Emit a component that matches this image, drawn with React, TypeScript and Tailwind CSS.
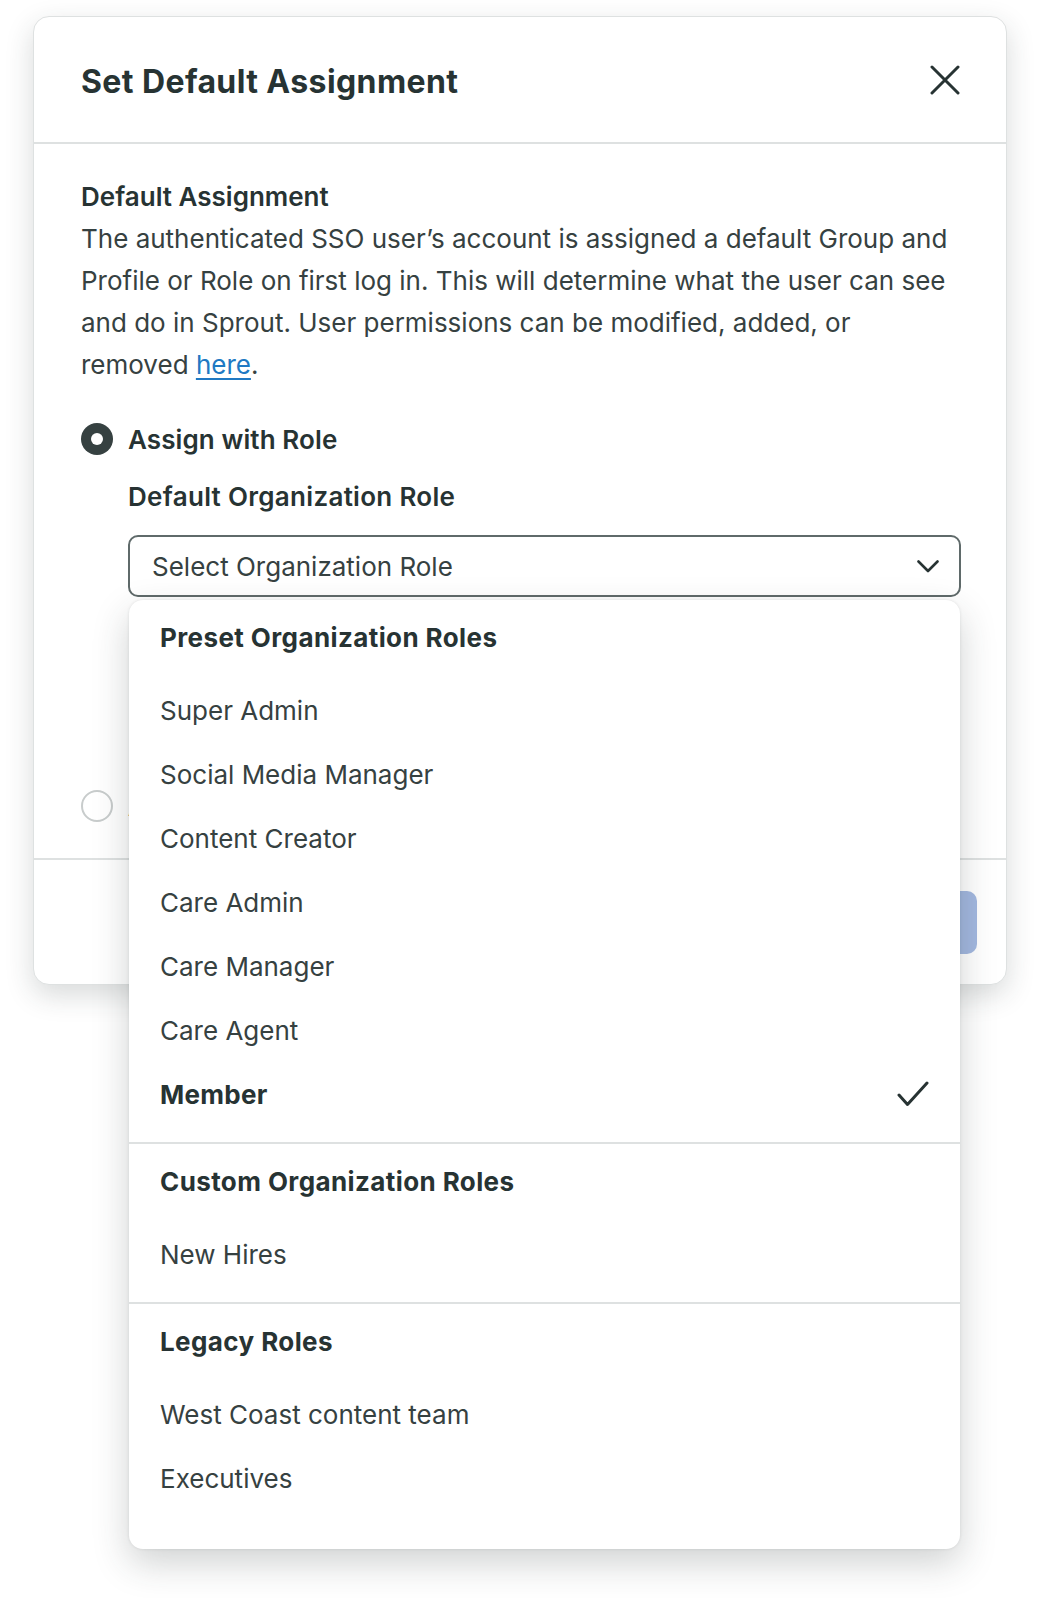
import { useState } from "react";

type Group = { title: string; items: string[] };

const groups: Group[] = [
  {
    title: "Preset Organization Roles",
    items: [
      "Super Admin",
      "Social Media Manager",
      "Content Creator",
      "Care Admin",
      "Care Manager",
      "Care Agent",
      "Member",
    ],
  },
  { title: "Custom Organization Roles", items: ["New Hires"] },
  { title: "Legacy Roles", items: ["West Coast content team", "Executives"] },
];

const CloseIcon = () => (
  <svg width="30" height="30" viewBox="0 0 30 30" fill="none">
    <path d="M2 2L28 28M28 2L2 28" stroke="#273333" strokeWidth="3" strokeLinecap="round" />
  </svg>
);

const Chevron = () => (
  <svg width="22" height="13" viewBox="0 0 22 13" fill="none">
    <path d="M1.5 1.5L11 11L20.5 1.5" stroke="#273333" strokeWidth="2.6" strokeLinecap="round" strokeLinejoin="round" />
  </svg>
);

const Check = () => (
  <svg width="32" height="26" viewBox="0 0 32 26" fill="none">
    <path d="M2 14L10.5 23.5L30 2" stroke="#273333" strokeWidth="3" strokeLinecap="round" strokeLinejoin="round" />
  </svg>
);

const Dropdown = ({ selected }: { selected: string }) => (
  <div className="absolute left-[1px] right-[1px] top-[calc(100%+3px)] z-10 rounded-[14px] bg-white shadow-[0_14px_36px_rgba(39,51,51,0.22),0_0_3px_rgba(39,51,51,0.12)]">
    {groups.map((g, gi) => (
      <div
        key={g.title}
        className={
          gi === groups.length - 1
            ? "pt-[22px] pb-[39px]"
            : "pt-[22px] pb-[16px] border-b-2 border-[#dee1e1]"
        }
      >
        <div className="px-[31px] mb-[24px] text-[26px] leading-[32px] font-bold tracking-[0.4px] text-[#273333]">
          {g.title}
        </div>
        {g.items.map((item) => (
          <div
            key={item}
            className={
              item === selected
                ? "h-16 px-[31px] flex items-center justify-between text-[26px] font-bold tracking-[0.3px] text-[#273333]"
                : "h-16 px-[31px] flex items-center justify-between text-[26px] text-[#364141]"
            }
          >
            <span>{item}</span>
            {item === selected && <Check />}
          </div>
        ))}
      </div>
    ))}
  </div>
);

export default function App() {
  const [role] = useState("Member");

  return (
    <div className="relative w-[1040px] h-[1598px] overflow-hidden bg-white font-['Inter',sans-serif] text-[#364141]">
      <div className="ml-[33px] mt-[16px] w-[974px] h-[969px] flex flex-col rounded-[16px] border border-[#dee1e1] bg-white shadow-[0_10px_28px_rgba(39,51,51,0.18)]">
        <div className="h-[127px] shrink-0 flex items-center justify-between pl-[47px] pr-[45px] border-b-2 border-[#dee1e1]">
          <h1 className="mt-[5px] text-[32px] font-bold tracking-[0.4px] text-[#273333]">Set Default Assignment</h1>
          <button className="w-[32px] h-[32px] flex items-center justify-center">
            <CloseIcon />
          </button>
        </div>

        <div className="flex-1 pt-[32px] pl-[47px] pr-[45px]">
          <div className="text-[26px] leading-[42px] font-semibold text-[#273333]">Default Assignment</div>
          <p className="text-[26px] leading-[42px]">
            The authenticated SSO user’s account is assigned a default Group and Profile or Role on first
            log in. This will determine what the user can see and do in Sprout. User permissions can be
            modified, added, or removed{" "}
            <a href="#" className="text-[#2079c3] underline underline-offset-4">
              here
            </a>
            .
          </p>

          <div className="mt-[32px] flex items-center gap-[15px] h-[42px]">
            <span className="w-[32px] h-[32px] rounded-full bg-[#364141] flex items-center justify-center">
              <span className="w-[12px] h-[12px] rounded-full bg-white" />
            </span>
            <span className="text-[26px] font-semibold tracking-[0.1px] text-[#273333]">Assign with Role</span>
          </div>

          <div className="pl-[47px]">
            <div className="mt-[16px] text-[26px] leading-[42px] font-semibold tracking-[0.3px] text-[#273333]">
              Default Organization Role
            </div>
            <div className="relative mt-[17px]">
              <div className="h-[62px] rounded-[10px] border-2 border-[#5f6a6a] flex items-center justify-between pl-[22px] pr-[20px]">
                <span className="text-[26px] text-[#364141]">Select Organization Role</span>
                <Chevron />
              </div>
              <Dropdown selected={role} />
            </div>
          </div>

          <div className="mt-[188px] flex items-center gap-[15px] h-[42px]">
            <span className="w-[32px] h-[32px] rounded-full border-2 border-[#c8cccc] bg-white" />
            <span className="text-[26px] font-semibold text-[#273333]">Assign with Group and Profile</span>
          </div>
        </div>

        <div className="h-[126px] shrink-0 border-t-2 border-[#dee1e1] flex items-center justify-end gap-4 pr-[29px]">
          <button className="h-[63px] px-8 rounded-[10px] bg-white text-[26px] text-[#364141]">Cancel</button>
          <button className="h-[63px] w-[200px] rounded-[10px] bg-[#a3b8e0] text-[26px] font-semibold text-white">
            Save
          </button>
        </div>
      </div>
    </div>
  );
}
